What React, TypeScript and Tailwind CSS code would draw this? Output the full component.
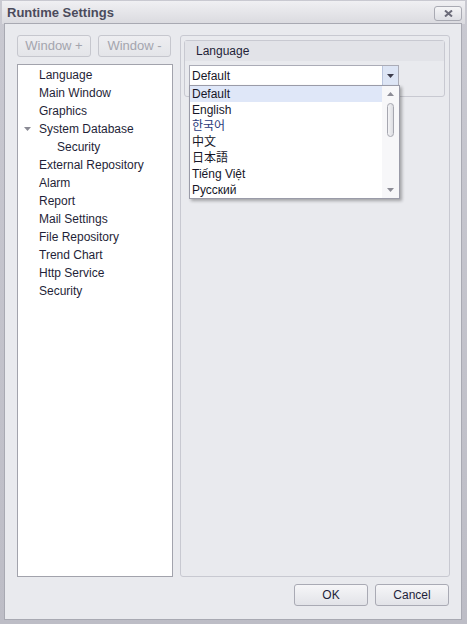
import type {ReactNode} from "react";

const font = "font-['Liberation_Sans','Noto_Sans_CJK_KR',sans-serif]"

const treeItems: {label: string, level: number, expanded?: boolean}[] = [
    {label: "Language", level: 0},
    {label: "Main Window", level: 0},
    {label: "Graphics", level: 0},
    {label: "System Database", level: 0, expanded: true},
    {label: "Security", level: 1},
    {label: "External Repository", level: 0},
    {label: "Alarm", level: 0},
    {label: "Report", level: 0},
    {label: "Mail Settings", level: 0},
    {label: "File Repository", level: 0},
    {label: "Trend Chart", level: 0},
    {label: "Http Service", level: 0},
    {label: "Security", level: 0},
]

const languages = ["Default", "English", "한국어", "中文", "日本語", "Tiếng Việt", "Русский"]

const DownArrow = ({color = "#3c3c4c"}: {color?: string}) => (
    <svg width="7" height="4" viewBox="0 0 7 4"><path d="M0 0H7L3.5 4Z" fill={color}/></svg>
)

const UpArrow = ({color = "#8c8c96"}: {color?: string}) => (
    <svg width="7" height="4" viewBox="0 0 7 4"><path d="M0 4H7L3.5 0Z" fill={color}/></svg>
)

const DialogButton = ({children, disabled, width}: {children: ReactNode, disabled?: boolean, width: string}) => (
    <div className={`${width} h-[22px] flex items-center justify-center rounded-[3px] border ${disabled
        ? "text-[13px] border-[#c6c7ce] bg-gradient-to-b from-[#eeeef1] to-[#e4e5e9] text-[#a4a5ae]"
        : "text-[12px] border-[#a9aab4] bg-gradient-to-b from-[#f6f6f8] to-[#e2e3e8] text-[#1e1e3a]"}`}>
        {children}
    </div>
)

const LanguageDropdown = () => (
    <div className="absolute left-0 top-[20px] w-[211px] h-[114px] bg-white border border-[#9a9ba8] shadow-[2px_2px_3px_rgba(0,0,0,0.3)] flex">
        <div className="flex-1 flex flex-col">
            {languages.map((lang, i) => (
                <div key={lang}
                     className={`h-[16px] pl-[2px] flex items-center text-[12px] leading-none ${i == 0 ? "bg-[#dfe7f8]" : ""} ${i == 2 ? "text-[#2a3a7a] text-[11px]" : "text-[#161628]"}`}>
                    {lang}
                </div>
            ))}
        </div>
        <div className="w-[17px] flex flex-col items-center bg-[#f7f7f9]">
            <div className="h-[14px] flex items-center justify-center pt-[2px]"><UpArrow/></div>
            <div className="mt-[3px] w-[7px] h-[34px] rounded-[4px] border border-[#a6a7b0] bg-gradient-to-r from-[#f4f4f6] to-[#dcdde2]"/>
            <div className="flex-1"/>
            <div className="h-[16px] flex items-center justify-center"><DownArrow color="#8c8c96"/></div>
        </div>
    </div>
)

export default function App() {
    return (
        <div className={`${font} w-[467px] h-[624px] bg-gradient-to-b from-[#c9c9d1] to-[#bdbdc6] flex flex-col`}>
            <div className="h-[23px] mx-[2px] mt-[1px] -mb-[1px] bg-gradient-to-b from-[#f0f0f3] to-[#dadadf] flex items-center justify-between pl-[5px] pr-[3px]">
                <div className="text-[13px] font-bold text-[#4b4b5c] leading-none">Runtime Settings</div>
                <div className="w-[28px] h-[15px] mt-[1px] rounded-[3px] border border-[#a9aab3] bg-gradient-to-b from-[#f5f5f7] to-[#dedfe4] flex items-center justify-center">
                    <svg width="9" height="7" viewBox="0 0 9 7">
                        <path d="M1 0.5L8 6.5M8 0.5L1 6.5" stroke="#6c6c7a" strokeWidth="2"/>
                    </svg>
                </div>
            </div>
            <div className="ml-[4px] mr-[5px] mb-[4px] flex-1 border border-[#a8a9b2] bg-[#e9eaee] pt-[11px] pl-[12px] pr-[11px] pb-[13px] flex flex-col gap-[7px]">
                <div className="flex-1 flex gap-[7px] min-h-0">
                    <div className="w-[156px] flex flex-col gap-[7px]">
                        <div className="flex gap-[7px]">
                            <DialogButton width="w-[74px]" disabled>Window +</DialogButton>
                            <DialogButton width="w-[73px]" disabled>Window -</DialogButton>
                        </div>
                        <div className="flex-1 bg-white border border-[#a2a3ac] pt-[1px]">
                            {treeItems.map((item, i) => (
                                <div key={i} className="h-[18px] flex items-center text-[12px] text-[#1f1f38] relative"
                                     style={{paddingLeft: 21 + item.level * 18}}>
                                    {item.expanded && (
                                        <span className="absolute left-[6px] top-[7px]"><DownArrow color="#8a8a94"/></span>
                                    )}
                                    {item.label}
                                </div>
                            ))}
                        </div>
                    </div>
                    <div className="flex-1 rounded-[3px] border border-[#c8c9d1] pt-[4px] pl-[3px] pr-[4px]">
                        <div className="rounded-[3px] border border-[#c8c9d1] h-[57px]">
                            <div className="h-[20px] bg-[#e2e3e8] pl-[11px] flex items-center text-[12px] text-[#1f1f38]">Language</div>
                            <div className="mt-[4px] ml-[4px] w-[210px] h-[21px] relative">
                                <div className="h-full border border-[#abacb7] bg-white flex items-center">
                                    <div className="flex-1 pl-[2px] text-[12px] text-[#161628]">Default</div>
                                    <div className="w-[16px] h-full bg-[#dde5f5] border-l border-[#bac5dd] flex items-center justify-center">
                                        <DownArrow/>
                                    </div>
                                </div>
                                <LanguageDropdown/>
                            </div>
                        </div>
                    </div>
                </div>
                <div className="flex justify-end gap-[7px] pr-[1px]">
                    <DialogButton width="w-[74px]">OK</DialogButton>
                    <DialogButton width="w-[74px]">Cancel</DialogButton>
                </div>
            </div>
        </div>
    )
}
